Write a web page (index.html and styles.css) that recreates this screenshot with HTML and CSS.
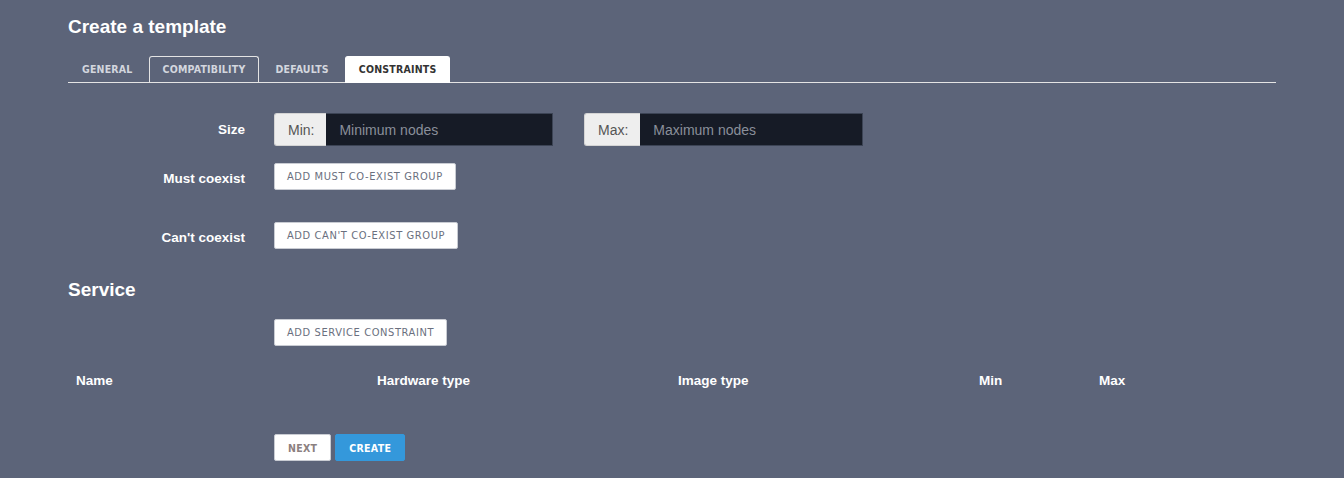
FILE: index.html
```html
<!DOCTYPE html>
<html>
<head>
<meta charset="utf-8">
<link rel="stylesheet" href="styles.css">
</head>
<body>
<div class="page">
  <h1 class="title">Create a template</h1>
  <ul class="tabs">
    <li class="tab">GENERAL</li>
    <li class="tab tab-hover">COMPATIBILITY</li>
    <li class="tab">DEFAULTS</li>
    <li class="tab tab-active">CONSTRAINTS</li>
  </ul>

  <div class="form-row row-size">
    <label class="label">Size</label>
    <div class="controls">
      <div class="input-group">
        <span class="addon">Min:</span>
        <span class="input placeholder">Minimum nodes</span>
      </div>
      <div class="input-group">
        <span class="addon">Max:</span>
        <span class="input placeholder">Maximum nodes</span>
      </div>
    </div>
  </div>

  <div class="form-row row-btn row-must">
    <label class="label label-btn">Must coexist</label>
    <div class="controls">
      <button class="btn">ADD MUST CO-EXIST GROUP</button>
    </div>
  </div>

  <div class="form-row row-btn row-cant">
    <label class="label label-btn">Can't coexist</label>
    <div class="controls">
      <button class="btn">ADD CAN'T CO-EXIST GROUP</button>
    </div>
  </div>

  <h2 class="title section-title">Service</h2>
  <div class="indent service-add">
    <button class="btn">ADD SERVICE CONSTRAINT</button>
  </div>

  <table class="table">
    <colgroup>
      <col class="c-wide"><col class="c-wide"><col class="c-wide"><col class="c-min"><col>
    </colgroup>
    <thead>
      <tr><th>Name</th><th>Hardware type</th><th>Image type</th><th>Min</th><th>Max</th></tr>
    </thead>
  </table>

  <div class="indent actions">
    <button class="btn btn-next">NEXT</button>
    <button class="btn btn-primary">CREATE</button>
  </div>
</div>
</body>
</html>
```
FILE: styles.css
```css
html, body {
  margin: 0;
  padding: 0;
  background: #5c6479;
}
body {
  font-family: "Liberation Sans", Arial, sans-serif;
  color: #fff;
}
.page {
  width: 1208px;
  margin-left: 68px;
  padding-top: 15px;
}
.title {
  margin: 0;
  font-size: 19px;
  line-height: 24px;
  font-weight: bold;
  color: #fff;
}
.tabs {
  list-style: none;
  margin: 17px 0 0;
  padding: 0;
  display: flex;
  gap: 2px;
  border-bottom: 1px solid #e4e4e4;
}
.tab {
  font-family: "DejaVu Sans Condensed", "DejaVu Sans", sans-serif;
  font-stretch: condensed;
  font-weight: bold;
  font-size: 10.5px;
  letter-spacing: 0.2px;
  line-height: 24px;
  padding: 0 13px;
  border: 1px solid transparent;
  border-bottom: none;
  border-radius: 3px 3px 0 0;
  color: #d3d6de;
  margin-bottom: -1px;
  height: 25px;
}
.tab-hover {
  border-color: #e4e4e4;
}
.tab-active {
  background: #fff;
  border-color: #fff;
  color: #333;
  height: 26px;
}
.form-row {
  display: flex;
  align-items: center;
}
.label {
  width: 177px;
  margin-right: 29px;
  text-align: right;
  font-size: 13.5px;
  font-weight: bold;
  color: #fff;
}
.controls {
  display: flex;
  gap: 31px;
}
.row-size {
  margin-top: 30px;
}
.input-group {
  display: flex;
  width: 279px;
  height: 33px;
  font-size: 14px;
}
.addon {
  display: flex;
  align-items: center;
  box-sizing: border-box;
  padding: 0 12px 0 13px;
  background: #eeeeee;
  color: #555;
  border-radius: 3px 0 0 3px;
  border: 1px solid #d4d4d4;
  border-right: none;
}
.input {
  flex: 1;
  display: flex;
  align-items: center;
  box-sizing: border-box;
  padding: 0 13px;
  background: #161b26;
  border: 1px solid #3c4455;
  border-left: none;
}
.placeholder {
  color: #8a8f9a;
}
.row-btn {
  align-items: flex-start;
}
.label-btn {
  padding-top: 8px;
  line-height: 16px;
}
.row-must {
  margin-top: 17px;
}
.row-cant {
  margin-top: 32px;
}
.btn {
  font-family: "DejaVu Sans Condensed", "DejaVu Sans", sans-serif;
  font-stretch: condensed;
  font-size: 11px;
  letter-spacing: 0.6px;
  color: #6a6f7e;
  background: #fff;
  border: 1px solid #c9ccd3;
  border-radius: 2px;
  height: 27px;
  padding: 0 12px;
  margin: 0;
  cursor: pointer;
}
.section-title {
  margin-top: 29px;
}
.indent {
  padding-left: 206px;
}
.service-add {
  margin-top: 17px;
}
.table {
  margin-top: 17px;
  width: 1208px;
  border-collapse: collapse;
  table-layout: fixed;
}
.c-wide {
  width: 301px;
}
.c-min {
  width: 120px;
}
.table th {
  text-align: left;
  padding: 8px;
  font-size: 13.5px;
  line-height: 20px;
  font-weight: bold;
  color: #fff;
}
.actions {
  margin-top: 35px;
  display: flex;
  gap: 4px;
}
.btn-next {
  font-weight: bold;
  font-size: 10.5px;
  letter-spacing: 0.3px;
  color: #8b8080;
  padding: 0 13px;
}
.btn-primary {
  font-weight: bold;
  font-size: 10.5px;
  letter-spacing: 0.3px;
  background: #3498db;
  border-color: #3498db;
  color: #fff;
  padding: 0 13px;
}
```
